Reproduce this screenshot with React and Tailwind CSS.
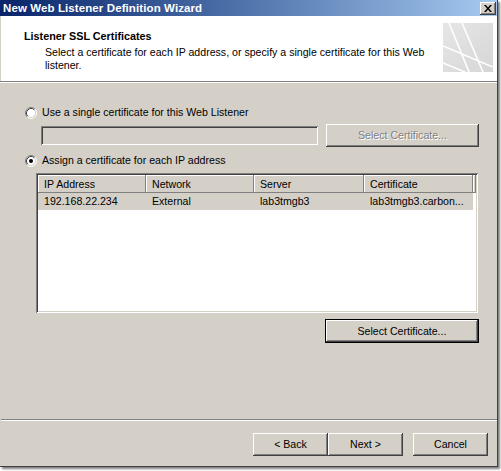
import React from 'react';

const raised = 'shadow-[inset_-1px_-1px_#404040,inset_1px_1px_#ffffff,inset_-2px_-2px_#808080,inset_2px_2px_#d4d0c8]';
const sunken = 'shadow-[inset_1px_1px_#808080,inset_-1px_-1px_#ffffff,inset_2px_2px_#404040,inset_-2px_-2px_#d4d0c8]';

const Radio = ({ checked }) => (
    <svg width="12" height="12" viewBox="0 0 12 12" className="shrink-0">
        <circle cx="6" cy="6" r="5" fill="#fff" />
        <path d="M2.11 9.89 A5.5 5.5 0 0 1 9.89 2.11" fill="none" stroke="#808080" />
        <path d="M9.89 2.11 A5.5 5.5 0 0 1 2.11 9.89" fill="none" stroke="#fff" />
        <path d="M2.82 9.18 A4.5 4.5 0 0 1 9.18 2.82" fill="none" stroke="#404040" />
        <path d="M9.18 2.82 A4.5 4.5 0 0 1 2.82 9.18" fill="none" stroke="#d4d0c8" />
        {checked && <circle cx="6" cy="6" r="2" fill="#000" />}
    </svg>
);

const Button = ({ children, className = '', disabled, isDefault }) => {
    const label = disabled
        ? <span className="text-[#808080] [text-shadow:1px_1px_0_#ffffff]">{children}</span>
        : <span className="text-black">{children}</span>;
    if (isDefault) {
        return (
            <div className={`border border-black ${className}`}>
                <div className={`w-full h-full flex items-center justify-center bg-[#d4d0c8] ${raised}`}>{label}</div>
            </div>
        );
    }
    return (
        <div className={`flex items-center justify-center bg-[#d4d0c8] ${raised} ${className}`}>{label}</div>
    );
};

const columns = [
    { title: 'IP Address', width: 'w-[108px]', value: '192.168.22.234' },
    { title: 'Network', width: 'w-[108px]', value: 'External' },
    { title: 'Server', width: 'w-[110px]', value: 'lab3tmgb3' },
    { title: 'Certificate', width: 'w-[109px]', value: 'lab3tmgb3.carbon...' },
];

const Logo = () => (
    <svg width="50" height="49" viewBox="0 0 50 49" className="shrink-0">
        <defs>
            <linearGradient id="lg" x1="0" y1="0" x2="1" y2="1">
                <stop offset="0" stopColor="#e6e6e6" />
                <stop offset="1" stopColor="#d6d6d6" />
            </linearGradient>
        </defs>
        <rect width="50" height="49" fill="url(#lg)" />
        <g stroke="#fff" strokeWidth="1.6" fill="none">
            <line x1="6" y1="0" x2="26" y2="49" />
            <line x1="19" y1="0" x2="40" y2="49" />
            <line x1="0" y1="23" x2="50" y2="44" />
            <line x1="0" y1="40" x2="22" y2="49" />
        </g>
    </svg>
);

export default function App() {
    return (
        <div className="w-[501px] h-[471px] bg-white font-['Liberation_Sans',Arial,sans-serif] text-[10.6px] leading-[13px] text-black">
            <div className="w-[498px] h-[467px] flex flex-col bg-[#d4d0c8] border-r border-b border-[#404040] shadow-[2px_2px_2px_rgba(0,0,0,0.5)]">
                {/* Title bar */}
                <div className="h-[16px] shrink-0 flex items-center justify-between pl-[3px] pr-[1px] bg-gradient-to-r from-[#0a246a] to-[#a6caf0]">
                    <span className="text-white font-bold text-[11.5px] tracking-[0.1px]">New Web Listener Definition Wizard</span>
                    <div className={`w-[16px] h-[13px] flex items-center justify-center bg-[#d4d0c8] ${raised}`}>
                        <svg width="8" height="7" viewBox="0 0 8 7">
                            <path d="M0 0h2l2 2.5L6 0h2L5 3.5 8 7H6L4 4.5 2 7H0l3-3.5z" fill="#000" />
                        </svg>
                    </div>
                </div>

                {/* Header */}
                <div className="h-[65px] shrink-0 bg-white flex justify-between pr-[4px] ml-[1px]">
                    <div className="pl-[23px] pt-[14px]">
                        <div className="font-bold text-[10.8px]">Listener SSL Certificates</div>
                        <div className="pl-[21px] mt-[3px]">
                            Select a certificate for each IP address, or specify a single certificate for this Web<br />
                            listener.
                        </div>
                    </div>
                    <div className="pt-[7px]">
                        <Logo />
                    </div>
                </div>
                <div className="h-[2px] shrink-0 border-t border-[#808080] border-b border-b-white" />

                {/* Body */}
                <div className="flex-1 flex flex-col pl-[25px]">
                    <div className="mt-[23px] flex items-center gap-[5px] h-[13px]">
                        <Radio />
                        <span>Use a single certificate for this Web Listener</span>
                    </div>
                    <div className="mt-[5px] ml-[16px] flex items-center gap-[8px]">
                        <div className={`w-[277px] h-[19px] bg-[#d4d0c8] ${sunken}`} />
                        <Button disabled className="w-[153px] h-[23px]">Select Certificate...</Button>
                    </div>
                    <div className="mt-[7px] flex items-center gap-[5px] h-[13px]">
                        <Radio checked />
                        <span>Assign a certificate for each IP address</span>
                    </div>

                    {/* List view */}
                    <div className={`mt-[6px] ml-[11px] w-[442px] h-[140px] bg-white p-[2px] ${sunken}`}>
                        <div className="flex h-[18px] bg-[#d4d0c8]">
                            {columns.map(c => (
                                <div key={c.title} className={`${c.width} h-full flex items-center pl-[6px] shadow-[inset_-1px_-1px_#808080,inset_1px_1px_#ffffff]`}>
                                    {c.title}
                                </div>
                            ))}
                            <div className="flex-1 h-full shadow-[inset_-1px_-1px_#808080,inset_1px_1px_#ffffff]" />
                        </div>
                        <div className="flex h-[17px] w-[435px] bg-[#d4d0c8]">
                            {columns.map(c => (
                                <div key={c.title} className={`${c.width} flex items-center pl-[6px]`}>
                                    {c.value}
                                </div>
                            ))}
                        </div>
                    </div>

                    <div className="mt-[6px] ml-[300px]">
                        <Button isDefault className="w-[154px] h-[24px]">Select Certificate...</Button>
                    </div>
                </div>

                {/* Footer */}
                <div className="h-[2px] shrink-0 ml-[1px] border-t border-[#808080] border-b border-b-white" />
                <div className="shrink-0 flex pt-[12px] pb-[10px] pl-[253px]">
                    <Button className="w-[75px] h-[23px]">&lt; Back</Button>
                    <Button className="w-[75px] h-[23px]">Next &gt;</Button>
                    <Button className="w-[75px] h-[23px] ml-[10px]">Cancel</Button>
                </div>
            </div>
        </div>
    );
}
